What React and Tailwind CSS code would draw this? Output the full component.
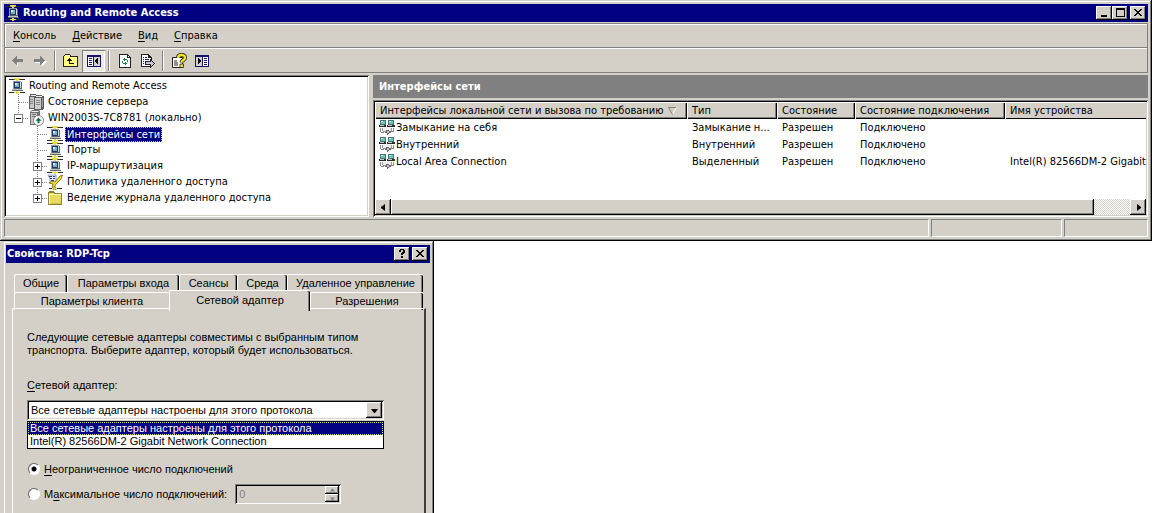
import React from "react";

const raised =
  "bg-[#d4d0c8] shadow-[inset_-1px_-1px_0_#000,inset_1px_1px_0_#fff,inset_-2px_-2px_0_#808080]";
const sunken =
  "shadow-[inset_1px_1px_0_#808080,inset_-1px_-1px_0_#fff,inset_2px_2px_0_#000,inset_-2px_-2px_0_#d4d0c8]";
const windowFrame =
  "bg-[#d4d0c8] shadow-[inset_-1px_-1px_0_#000,inset_1px_1px_0_#d4d0c8,inset_-2px_-2px_0_#808080,inset_2px_2px_0_#fff]";
const dialogFrame =
  "bg-[#d4d0c8] shadow-[inset_-1px_0_0_#000,inset_1px_1px_0_#d4d0c8,inset_-2px_0_0_#808080,inset_4px_0_0_#d4d0c8,inset_5px_2px_0_#fff]";

function Icon({ children, w = 16, h = 16 }) {
  return (
    <svg width={w} height={h} viewBox={`0 0 ${w} ${h}`} shapeRendering="crispEdges" className="block shrink-0" aria-hidden="true">
      {children}
    </svg>
  );
}

function NetIcon() {
  return (
    <Icon>
      <path d="M0 1h16v1H0zM0 14h16v1H0z" fill="#2c2c2c" />
      <path d="M5 0h6v2H5zM7 2h2v1H7zM5 14h6v1H5zM7 13h2v3H7z" fill="#e8dc40" />
      <path d="M5 1h1v1H5zM10 1h1v1h-1z" fill="#8a8430" />
      <path d="M4 3h8v8H4z" fill="#dcdcd8" />
      <path d="M4 3h8v1H4zM4 3h1v8H4z" fill="#8c98b0" />
      <path d="M5 4h6v6H5z" fill="#203468" />
      <path d="M6 5h4v4H6z" fill="#78b4c0" />
      <path d="M6 5h2v2H6z" fill="#d0f0f0" />
      <path d="M12 4h1v8h-1zM5 10h7v1H5z" fill="#5c6470" />
      <path d="M3 11h10v1H3z" fill="#c4c4c0" />
      <path d="M3 12h11v1H3z" fill="#60687c" />
    </Icon>
  );
}

function ServersIcon() {
  return (
    <Icon>
      <path d="M2 0h6v1h6v1h2v12l-2 2H6v-1H1V2h1z" fill="#5c5c5c" />
      <path d="M2 3h4v11H2z" fill="#c8c8c8" />
      <path d="M3 1h5v1H2z" fill="#eee" />
      <path d="M7 4h6v11H7z" fill="#d0d0d0" />
      <path d="M8 2h6v1H7z" fill="#f0f0f0" />
      <path d="M14 4h1v9h-1z" fill="#9c9c9c" />
      <path d="M2 5h3v1H2zM2 7h3v1H2zM2 9h3v1H2zM8 6h4v1H8zM8 8h4v1H8zM8 10h4v1H8z" fill="#888" />
    </Icon>
  );
}

function ServerUpIcon() {
  return (
    <svg width="16" height="16" viewBox="0 0 16 16" className="block shrink-0" aria-hidden="true">
      <path d="M2 2l2-2h7l1 1v10l-2 4H2z" fill="#707070" />
      <path d="M3 3h6v11H3z" fill="#c4c4c4" />
      <path d="M4 1h7l-1 1H3z" fill="#eee" />
      <path d="M4 4h4v1H4zM4 6h4v1H4z" fill="#777" />
      <circle cx="10.500" cy="10.500" r="5" fill="#fff" stroke="#666" strokeWidth=".8" />
      <path d="M10.500 7.500l3 3.200h-2v2.500h-2v-2.500h-2z" fill="#0a7050" />
    </svg>
  );
}

function PolicyIcon() {
  return (
    <svg width="16" height="16" viewBox="0 0 16 16" className="block shrink-0" aria-hidden="true">
      <path d="M1 1h8v8H3V5z" fill="#f0f2ff" stroke="#8088b8" strokeWidth=".8" />
      <path d="M2 2.500h3M6 2.500h2M3 4.500h2M6 4.500h2M4 6.500h3" stroke="#2838a0" strokeWidth="1" />
      <path d="M15.500 1l-1.500 4-5 5-2 4-2-1 1-3-4-1 3-2 3 1 5-6z" fill="#efdf35" stroke="#6f650c" strokeWidth=".8" />
      <path d="M2 14.500h3M10 14.500h5" stroke="#222" strokeWidth="1" />
      <path d="M6 13h3v3H6z" fill="#e8e03a" stroke="#6f650c" strokeWidth=".5" />
    </svg>
  );
}

function FolderIcon() {
  return (
    <Icon>
      <path d="M1 2h1V1h5v1h1v1h7v12H1z" fill="#8b8430" />
      <path d="M2 3h5v1h7v10H2z" fill="#e8dc60" />
      <path d="M2 4h12v1H2zM2 4h1v10H2z" fill="#fff8b0" />
      <path d="M4 13h10v1H4z" fill="#d0bc40" />
    </Icon>
  );
}

function LanIcon() {
  return (
    <Icon>
      <path d="M1 0h6v5H1zM9 0h6v5H9z" fill="#4a7472" />
      <path d="M2 1h4v3H2zM10 1h4v3h-4z" fill="#6cc4bc" />
      <path d="M2 1h2v1H2zM10 1h2v1h-2z" fill="#d4fffa" />
      <path d="M0 5h7v2H0zM8 5h8v2H8z" fill="#2a2a2a" />
      <path d="M1 5h4v1H1zM9 5h4v1H9z" fill="#c8c8c8" />
      <path d="M1 8h1v4h3v1H2v-1H1zM14 8h1v4h-3v-1h2z" fill="#888" />
      <path d="M4 7h8v4h-2v1H6v-1H4z" fill="#f0f0f0" />
      <path d="M3 8h1v3H3zM12 8h1v3h-1zM4 11h3v1H4z" fill="#999" />
      <path d="M7 10h3v1h2v2h-2v1H9v1H8v-2H6v-1h1z" fill="#666" />
      <path d="M8 11h2v2H8z" fill="#ddb8d0" />
    </Icon>
  );
}

function ArrowIcon({ right }) {
  return (
    <Icon>
      {right ? (
        <>
          <path d="M3 7h6V4h1v1h1v1h1v1h1v1h2v1h-1v1h-1v1h-1v1h-1v1h-1v-3H3z" fill="#fff" />
          <path d="M2 6h6V3h1v1h1v1h1v1h1v1h1v1h-1v1h-1v1h-1v1H9v1H8V9H2z" fill="#808080" />
        </>
      ) : (
        <>
          <path d="M15 7v3H9v3H8v-1H7v-1H6v-1h9z" fill="#fff" />
          <path d="M14 6H8V3H7v1H6v1H5v1H4v1H3v1h1v1h1v1h1v1h1v1h1V9h6z" fill="#808080" />
        </>
      )}
    </Icon>
  );
}

function UpFolderIcon() {
  return (
    <Icon>
      <path d="M0 3h1V2h1V1h5v1h1v1h7v11H0z" fill="#222" />
      <path d="M1 3h6v1h7v9H1z" fill="#ffff80" />
      <path d="M2 2h5v1H2z" fill="#fffbb0" />
      <path d="M6 5h1v1h1v1h1v1H7v2h4v1H6V8H4V7h1V6h1z" fill="#111" />
    </Icon>
  );
}

function PaneIcon({ flip }) {
  return (
    <Icon>
      <path d="M1 2h14v12H1z" fill="#14146c" />
      {flip ? (
        <>
          <path d="M2 4h6v9H2z" fill="#d4d0c8" />
          <path d="M9 4h5v9H9z" fill="#fff" />
          <path d="M4 5h1v1h1v1h1v2H6v1H5v1H4z" fill="#000" />
          <path d="M10 5h3v1h-3zM10 7h3v1h-3zM10 9h3v1h-3zM10 11h3v1h-3z" fill="#14146c" />
        </>
      ) : (
        <>
          <path d="M2 4h5v9H2z" fill="#fff" />
          <path d="M8 4h6v9H8z" fill="#d4d0c8" />
          <path d="M3 5h3v1H3zM3 7h3v1H3zM3 9h3v1H3zM3 11h3v1H3z" fill="#14146c" />
          <path d="M12 5h-1v1h-1v1H9v2h1v1h1v1h1z" fill="#000" />
        </>
      )}
    </Icon>
  );
}

function RefreshIcon() {
  return (
    <Icon>
      <path d="M2 1h9v1h1v1h1v1h1v11H2z" fill="#222" />
      <path d="M3 2h7v3h3v9H3z" fill="#fff" />
      <path d="M11 3h1v1h-1z" fill="#fff" />
      <path d="M7 5h1v1h2v1h1v2h-1V7H8v1H7V7H6V6h1zM5 8h1v2h2V9h1v1h1v1H9v1H8v-1H6v-1H5z" fill="#168040" />
    </Icon>
  );
}

function ExportIcon() {
  return (
    <Icon>
      <path d="M1 1h8v1h1v1h1v1h1v10H1z" fill="#222" />
      <path d="M2 2h6v3h3v8H2z" fill="#fff" />
      <path d="M3 4h1v1H3zM5 4h2v1H5zM3 6h1v1H3zM5 6h4v1H5zM3 8h1v1H3zM3 10h1v1H3zM5 10h2v1H5z" fill="#14146c" />
      <path d="M5 8h5V6h1v1h1v1h1v1h1v1h1v1h-1v1h-1v1h-1v1h-1v1h-1v-3H5z" fill="#222" />
      <path d="M6 9h5V8h1v1h1v1h1v1h-1v1h-1v1h-1v-2H6z" fill="#c8c8d8" />
    </Icon>
  );
}

function HelpIcon() {
  return (
    <svg width="16" height="16" viewBox="0 0 16 16" className="block shrink-0" aria-hidden="true">
      <path d="M1.500 4.500h10v10h-10z" fill="#fff" stroke="#222" />
      <path d="M3 8h3M3 10h4M3 12h4" stroke="#222" />
      <path d="M7 5c0-4 7-4 7-.5 0 3-3.500 2.500-3.500 5" fill="none" stroke="#222" strokeWidth="4" />
      <path d="M7 5c0-4 7-4 7-.5 0 3-3.500 2.500-3.500 5" fill="none" stroke="#f4e428" strokeWidth="2.400" />
      <path d="M9 11h3.500v3.500H9z" fill="#f4e428" stroke="#222" strokeWidth=".8" />
    </svg>
  );
}

function Triangle({ dir, small, color = "#000" }) {
  const d = { left: "M5 0v7L1 4V3z", right: "M2 0v7l4-3V3z", down: "M0 2h7L4 6H3z", up: "M0 5h7L4 1H3z" }[dir];
  const size = small ? 5 : 7;
  return (
    <svg width={size} height={size} viewBox="0 0 7 7" className="block shrink-0" aria-hidden="true">
      <path d={d} fill={color} />
    </svg>
  );
}

function Caption({ kind }) {
  const shapes = {
    min: <path d="M3 8h6v2H3z" />,
    max: <path d="M2 1h9v9H2zM3 3v6h7V3z" fillRule="evenodd" />,
    close: <path d="M2 2h2v1h1v1h2V3h1V2h2v1H9v1H8v1H7v1h1v1h1v1h1v1H8V8H7V7H5v1H4v1H2V8h1V7h1V6h1V5H4V4H3V3H2z" />,
    help: <path d="M3 2h1V1h4v1h1v3H8v1H7v1H5V5h1V4h1V2H5v2H3zM5 8h2v2H5z" />,
  };
  const names = { min: "Свернуть", max: "Развернуть", close: "Закрыть", help: "Справка" };
  return (
    <button type="button" aria-label={names[kind]} className={`flex h-[14px] w-4 items-center justify-center ${raised}`}>
      <Icon w={12} h={12}>{shapes[kind]}</Icon>
    </button>
  );
}

function Cell({ box, down }) {
  return (
    <svg width="19" height="16" viewBox="0 0 19 16" shapeRendering="crispEdges" className="block shrink-0" aria-hidden="true">
      <g stroke="#808080" strokeDasharray="1 1" fill="none">
        <path d="M9.500 0v8" />
        {down && <path d="M9.500 8v8" />}
        <path d="M10 8.500h9" />
      </g>
      {box && (
        <>
          <path d="M5 4h9v9H5z" fill="#808080" />
          <path d="M6 5h7v7H6z" fill="#fff" />
          <path d={box === "+" ? "M7 8h5v1H7zM9 6h1v5H9z" : "M7 8h5v1H7z"} fill="#000" />
        </>
      )}
    </svg>
  );
}

function TreeRow({ level = 0, box, down, icon, selected, children }) {
  return (
    <div className="flex h-4 items-center whitespace-nowrap">
      {level === 2 && <span className="w-[19px] shrink-0" />}
      {level > 0 && <Cell box={box} down={down} />}
      {icon}
      <span className={selected ? "ml-0.5 bg-[#000080] px-0.5 leading-[15px] text-white outline-1 -outline-offset-1 outline-dotted outline-[#d8d860]" : "ml-1 leading-4"}>
        {children}
      </span>
    </div>
  );
}

const menus = [["К", "онсоль"], ["Д", "ействие"], ["В", "ид"], ["С", "правка"]];

function ToolButton({ label, pressed, disabled, children }) {
  return (
    <button
      type="button"
      aria-label={label}
      disabled={disabled}
      className={`flex h-[22px] w-[23px] items-center justify-center ${pressed ? "bg-[#ebe9e4] shadow-[inset_1px_1px_0_#808080,inset_-1px_-1px_0_#fff]" : ""}`}
    >
      {children}
    </button>
  );
}

function Separator() {
  return <span className="mx-[3px] h-5 w-0.5 border-r border-l border-r-white border-l-[#808080]" />;
}

const columns = ["Интерфейсы локальной сети и вызова по требованию", "Тип", "Состояние", "Состояние подключения", "Имя устройства"];
const rows = [
  ["Замыкание на себя", "Замыкание н...", "Разрешен", "Подключено", ""],
  ["Внутренний", "Внутренний", "Разрешен", "Подключено", ""],
  ["Local Area Connection", "Выделенный", "Разрешен", "Подключено", "Intel(R) 82566DM-2 Gigabit N"],
];

function InterfaceList() {
  return (
    <div className={`flex min-w-0 flex-1 flex-col bg-white p-0.5 ${sunken}`}>
      <div className="flex-1 overflow-hidden">
        <table className="w-full table-fixed border-collapse text-left">
          <colgroup>
            <col className="w-[312px]" />
            <col className="w-[90px]" />
            <col className="w-[78px]" />
            <col className="w-[150px]" />
            <col />
          </colgroup>
          <thead>
            <tr>
              {columns.map((c, i) => (
                <th key={c} className={`h-[17px] bg-[#d4d0c8] p-0 font-normal whitespace-nowrap ${i === 4 ? "shadow-[inset_1px_1px_0_#fff,inset_0_-1px_0_#000]" : "shadow-[inset_1px_1px_0_#fff,inset_-1px_-1px_0_#000,inset_-2px_-2px_0_#808080]"}`}>
                  <div className="flex items-center gap-1 overflow-hidden pl-[5px] leading-4">
                    {c}
                    {i === 0 && (
                      <svg width="9" height="8" viewBox="0 0 9 8" className="shrink-0" aria-hidden="true">
                        <path d="M8.500 .5L4.500 7.500" stroke="#fff" fill="none" />
                        <path d="M8 .5H.5l4 7" stroke="#808080" fill="none" />
                      </svg>
                    )}
                  </div>
                </th>
              ))}
            </tr>
          </thead>
          <tbody>
            {rows.map((r) => (
              <tr key={r[0]}>
                {r.map((v, i) => (
                  <td key={i} className="h-[17px] overflow-hidden p-0 whitespace-nowrap">
                    <div className={`flex items-center leading-4 ${i === 0 ? "gap-px pl-1" : "pl-[5px]"}`}>
                      {i === 0 && <LanIcon />}
                      {v}
                    </div>
                  </td>
                ))}
              </tr>
            ))}
          </tbody>
        </table>
      </div>
      <div className="flex h-4 bg-[repeating-conic-gradient(#fff_0_25%,#d4d0c8_0_50%)] bg-[length:2px_2px]">
        <button type="button" aria-label="Влево" className={`flex w-4 items-center justify-center ${raised}`}><Triangle dir="left" /></button>
        <div className={`mr-[36px] flex-1 ${raised}`} />
        <button type="button" aria-label="Вправо" className={`flex w-4 items-center justify-center ${raised}`}><Triangle dir="right" /></button>
      </div>
    </div>
  );
}

function ConsoleWindow() {
  return (
    <section className={`p-1 font-['DejaVu_Sans_Condensed','DejaVu_Sans',sans-serif] text-[11px] ${windowFrame}`}>
      <header className="flex h-[18px] items-center bg-[#000080] pr-0.5 pl-px text-white">
        <NetIcon />
        <h1 className="ml-0.5 flex-1 font-bold">Routing and Remote Access</h1>
        <Caption kind="min" />
        <Caption kind="max" />
        <span className="w-0.5" />
        <Caption kind="close" />
      </header>
      <div className="mt-px border border-[#808080] shadow-[inset_1px_1px_0_#fff]">
        <nav className="flex h-6 items-center gap-4 border-b border-[#808080] pt-0.5 pl-2">
          {menus.map(([k, rest]) => (
            <button type="button" key={k}><u className="underline-offset-2">{k}</u>{rest}</button>
          ))}
        </nav>
        <div className="flex h-6 items-center border-t border-white">
          <ToolButton label="Назад" disabled><ArrowIcon /></ToolButton>
          <ToolButton label="Вперед" disabled><ArrowIcon right /></ToolButton>
          <Separator />
          <ToolButton label="Вверх"><UpFolderIcon /></ToolButton>
          <ToolButton label="Дерево консоли" pressed><PaneIcon /></ToolButton>
          <Separator />
          <ToolButton label="Обновить"><RefreshIcon /></ToolButton>
          <ToolButton label="Экспорт"><ExportIcon /></ToolButton>
          <Separator />
          <ToolButton label="Справка"><HelpIcon /></ToolButton>
          <ToolButton label="Панель действий"><PaneIcon flip /></ToolButton>
        </div>
      </div>
      <div className="mt-0.5 grid grid-cols-[365px_minmax(0,1fr)] gap-1">
        <div className={`min-h-[142px] bg-white pt-[3px] pl-[5px] ${sunken}`}>
          <TreeRow icon={<NetIcon />}>Routing and Remote Access</TreeRow>
          <TreeRow level={1} down icon={<ServersIcon />}>Состояние сервера</TreeRow>
          <TreeRow level={1} box="-" icon={<ServerUpIcon />}>WIN2003S-7C8781 (локально)</TreeRow>
          <TreeRow level={2} down selected icon={<NetIcon />}>Интерфейсы сети</TreeRow>
          <TreeRow level={2} down icon={<NetIcon />}>Порты</TreeRow>
          <TreeRow level={2} down box="+" icon={<NetIcon />}>IP-маршрутизация</TreeRow>
          <TreeRow level={2} down box="+" icon={<PolicyIcon />}>Политика удаленного доступа</TreeRow>
          <TreeRow level={2} box="+" icon={<FolderIcon />}>Ведение журнала удаленного доступа</TreeRow>
        </div>
        <div className="flex min-w-0 flex-col gap-0.5">
          <h2 className="flex h-[23px] items-center bg-[#808080] pt-0.5 pl-[6px] font-bold text-white">Интерфейсы сети</h2>
          <InterfaceList />
        </div>
      </div>
      <footer className="mt-0.5 grid h-[18px] grid-cols-[minmax(0,1fr)_131px_84px] gap-0.5">
        <div className="border border-t-[#808080] border-r-white border-b-white border-l-[#808080]" />
        <div className="border border-t-[#808080] border-r-white border-b-white border-l-[#808080]" />
        <div className="border border-t-[#808080] border-r-white border-b-white border-l-[#808080]" />
      </footer>
    </section>
  );
}

const tabShape = "rounded-t-[2px] border-t border-l border-white text-center whitespace-nowrap";
const tabEdge = "shadow-[inset_-1px_0_0_#000,inset_-2px_0_0_#808080]";

function Radio({ id, checked, children }) {
  return (
    <div className="flex h-[14px] items-center gap-1">
      <input
        id={id}
        type="radio"
        name="limit"
        defaultChecked={checked}
        className="m-0 h-3 w-3 appearance-none rounded-full border border-t-[#606060] border-r-white border-b-white border-l-[#606060] bg-white checked:bg-[radial-gradient(circle,#000_2px,#fff_3px)]"
      />
      <label htmlFor={id} className="whitespace-nowrap">{children}</label>
    </div>
  );
}

function PropertiesDialog() {
  return (
    <section className={`flex w-[434px] max-w-full flex-1 flex-col px-1 pt-1 font-['Liberation_Sans',sans-serif] text-[11px] ${dialogFrame}`}>
      <header className="ml-0.5 flex h-[18px] items-center bg-[#000080] pr-0.5 pl-px font-['DejaVu_Sans_Condensed','DejaVu_Sans',sans-serif] text-white">
        <h2 className="flex-1 font-bold">Свойства: RDP-Tcp</h2>
        <Caption kind="help" />
        <span className="w-0.5" />
        <Caption kind="close" />
      </header>
      <div role="tablist" className="mt-[11px] mr-[7px] ml-[10px]">
        <div className="grid h-4 grid-cols-[53px_112px_58px_50px_minmax(0,1fr)]">
          {["Общие", "Параметры входа", "Сеансы", "Среда", "Удаленное управление"].map((t) => (
            <button type="button" role="tab" key={t} className={`${tabShape} ${tabEdge}`}>{t}</button>
          ))}
        </div>
        <div className="grid h-[18px] grid-cols-[155px_141px_minmax(0,1fr)] items-end">
          <button type="button" role="tab" className={`h-[18px] ${tabShape}`}>Параметры клиента</button>
          <button type="button" role="tab" aria-selected="true" className={`z-10 -mb-px h-[21px] bg-[#d4d0c8] pb-[2px] ${tabShape} ${tabEdge}`}>Сетевой адаптер</button>
          <button type="button" role="tab" className={`h-[18px] ${tabShape} ${tabEdge}`}>Разрешения</button>
        </div>
      </div>
      <div className="mr-1 ml-2 flex-1 border-t border-r-2 border-l border-t-white border-r-[#404040] border-l-white pt-[22px] pl-[14px]">
        <p className="leading-[13px]">
          Следующие сетевые адаптеры совместимы с выбранным типом<br />
          транспорта. Выберите адаптер, который будет использоваться.
        </p>
        <label htmlFor="adapter" className="mt-[22px] block leading-[13px]"><u className="underline-offset-2">С</u>етевой адаптер:</label>
        <div className="relative mt-2 w-[357px]">
          <div className={`flex h-5 bg-white p-0.5 ${sunken}`}>
            <select id="adapter" className="min-w-0 flex-1 appearance-none bg-transparent pl-0.5 outline-none">
              <option>Все сетевые адаптеры настроены для этого протокола</option>
              <option>Intel(R) 82566DM-2 Gigabit Network Connection</option>
            </select>
            <span className={`pointer-events-none flex w-4 items-center justify-center ${raised}`}><Triangle dir="down" /></span>
          </div>
          <ul role="listbox" aria-label="Сетевой адаптер" className="absolute top-full left-0 mt-px w-full border border-black bg-white leading-[13px]">
            <li role="option" aria-selected="true" className="bg-[#000080] pl-0.5 text-white outline-1 -outline-offset-1 outline-dotted outline-[#d8d860]">Все сетевые адаптеры настроены для этого протокола</li>
            <li role="option" aria-selected="false" className="pl-0.5">Intel(R) 82566DM-2 Gigabit Network Connection</li>
          </ul>
        </div>
        <div className="mt-[42px] flex flex-col gap-2 pl-px">
          <Radio id="unlimited" checked><u className="underline-offset-2">Н</u>еограниченное число подключений</Radio>
          <div className="flex items-center gap-2">
            <Radio id="maximum">М<u className="underline-offset-2">а</u>ксимальное число подключений:</Radio>
            <div className={`flex h-5 w-[106px] p-0.5 ${sunken}`}>
              <input aria-label="Максимальное число подключений" disabled defaultValue="0" className="min-w-0 flex-1 bg-transparent pl-0.5 text-[#808080]" />
              <div className="flex w-[14px] flex-col">
                <button type="button" disabled aria-label="Больше" className={`flex h-2 items-center justify-center ${raised}`}><Triangle dir="up" small color="#808080" /></button>
                <button type="button" disabled aria-label="Меньше" className={`flex h-2 items-center justify-center ${raised}`}><Triangle dir="down" small color="#808080" /></button>
              </div>
            </div>
          </div>
        </div>
      </div>
    </section>
  );
}

export default function App() {
  return (
    <main className="flex min-h-screen flex-col bg-white text-black">
      <ConsoleWindow />
      <PropertiesDialog />
    </main>
  );
}
